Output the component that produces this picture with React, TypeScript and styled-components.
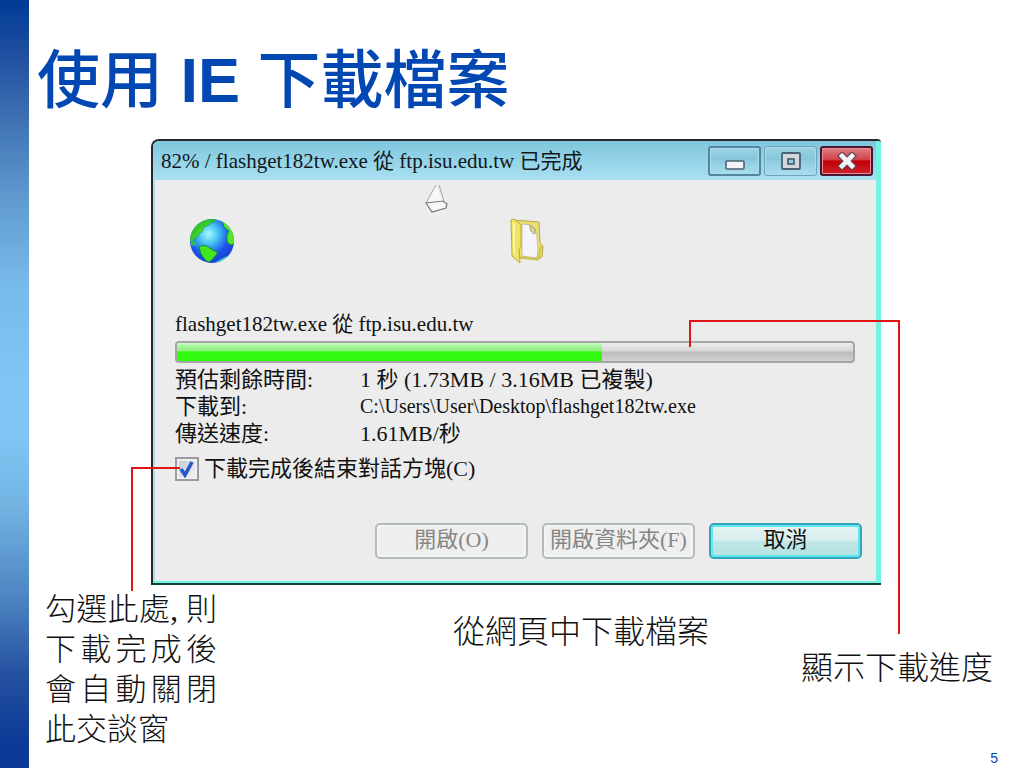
import React from 'react';
import styled, { createGlobalStyle } from 'styled-components';

const serif = '"Liberation Serif", "Noto Sans CJK TC", serif';
const sans = '"Liberation Sans", "Noto Sans CJK TC", sans-serif';

const GlobalStyle = createGlobalStyle`
  * { box-sizing: border-box; }
  body { margin: 0; background: #fff; }
  h1, h2, p, dl, dd, dt { margin: 0; font-weight: 400; }
`;

const Slide = styled.div`
  display: flex;
  min-height: 100vh;
  background: #fff;
`;

const SideStrip = styled.div`
  flex: 0 0 29px;
  background: linear-gradient(
    #003a96 0%, #1f4fa0 7%, #4073b4 16%, #609bd0 26%, #78bae9 37%, #80c5f3 50%,
    #80c5f3 57%, #72b3e2 66%, #4f88c4 77%, #24509f 88%, #0a3a96 97%
  );
`;

const Content = styled.main`
  flex: 1;
  min-width: 0;
  display: flex;
  flex-direction: column;
`;

const Title = styled.h1`
  padding: 32px 8px 11px;
  font: 500 63px/96px ${sans};
  color: #0347b3;
  strong { font-weight: 700; }
`;

const Stage = styled.section`
  position: relative;
  margin: 0 143px 0 122px;
`;

const Dialog = styled.div`
  border: solid #26262e;
  border-width: 2px 0 2px 2px;
  border-bottom-color: #12403f;
  border-radius: 8px 4px 0 0;
  background: #ececec;
  overflow: hidden;
`;

const DialogFrame = styled.div`
  border: solid #6ff5e2;
  border-width: 0 5px 2px 0;
  box-shadow: inset 2px 0 #b4dcec;
`;

const TitleBar = styled.header`
  display: flex;
  align-items: center;
  justify-content: space-between;
  height: 39px;
  padding: 0 3px 0 8px;
  background: linear-gradient(#7fc6de, #a9e0f1);
`;

const DialogTitle = styled.h2`
  font: 21px/32px ${serif};
  color: #10181c;
  white-space: nowrap;
`;

const WindowButtons = styled.div`
  display: flex;
  gap: 3px;
`;

const WindowButton = styled.button<{ $kind: 'normal' | 'faint' | 'close' }>`
  display: grid;
  place-items: center;
  width: 53px;
  height: 30px;
  padding: 0;
  border-radius: 3px;
  border: ${p => (p.$kind === 'close' ? '2px solid #4a1630' : p.$kind === 'faint' ? '1px solid #6fa5ba' : '2px solid #5586a0')};
  box-shadow: inset 0 0 0 1px ${p => (p.$kind === 'close' ? '#e88d96' : '#a9dcec')};
  background: ${p =>
    p.$kind === 'close'
      ? 'linear-gradient(#e0808a, #d3404a 45%, #c40008 50%, #d02028)'
      : 'linear-gradient(#9bd3e4, #86c6db 45%, #8fcce0 50%, #a9deee)'};
`;

const Body = styled.div`
  padding: 4px 14px 22px 22px;
`;

const FlyingFiles = styled.div`
  display: flex;
  align-items: center;
  height: 113px;
  padding-left: 15px;
  margin-bottom: 14px;
`;

const FlyingPaper = styled.svg`
  align-self: flex-start;
  margin: 0 62px 0 191px;
`;

const Transfer = styled.p`
  font: 21px/26px ${serif};
  color: #111;
`;

const Progress = styled.div`
  height: 22px;
  margin: 4px 7px 3px 0;
  border: 2px solid #a6a6a6;
  border-radius: 4px;
  background: linear-gradient(#ededed, #d6d6d6 45%, #bcbcbc 50%, #d0d0d0);
  overflow: hidden;
`;

const ProgressFill = styled.div`
  height: 100%;
  background: linear-gradient(#c5fbbd, #8af07a 42%, #33fb10 50%, #33fb10);
`;

const Details = styled.dl`
  display: grid;
  grid-template-columns: 185px 1fr;
  font: 22px/27px ${serif};
  color: #111;
`;

const Path = styled.dd`
  font-size: 20px;
`;

const Option = styled.label`
  display: flex;
  align-items: center;
  gap: 5px;
  margin-top: 6px;
  font: 22px/32px ${serif};
  color: #111;
`;

const CheckBox = styled.span`
  display: grid;
  > * { grid-area: 1 / 1; }
  svg { place-self: center; pointer-events: none; }
`;

const CheckInput = styled.input`
  appearance: none;
  width: 24px;
  height: 24px;
  margin: 0;
  border: 2px solid #9a9ca0;
  background: linear-gradient(135deg, #c2c8d2, #f6f6f6);
  box-shadow: inset 0 0 0 2px #f0f0f0;
`;

const Actions = styled.div`
  display: flex;
  justify-content: flex-end;
  gap: 14px;
  margin-top: 38px;
`;

const ActionButton = styled.button<{ $primary?: boolean }>`
  width: 153px;
  height: 36px;
  padding: 0 0 2px;
  border-radius: 5px;
  font: 22px/30px ${serif};
  color: ${p => (p.$primary ? '#111' : '#868686')};
  border: 2px solid ${p => (p.$primary ? '#35a3b8' : '#b2bcbc')};
  box-shadow: inset 0 0 0 2px ${p => (p.$primary ? '#5ce9ee' : '#f4f4f4')};
  background: ${p => (p.$primary ? 'linear-gradient(#e6f2f2, #d8eeee 48%, #bfe6e6 52%, #b4e2e2)' : '#efefef')};
`;

const CheckPointer = styled.div`
  position: absolute;
  left: -20px;
  top: 328px;
  width: 49px;
  height: 124px;
  border: solid #e01616;
  border-width: 2px 0 0 2px;
`;

const ProgressPointer = styled.div`
  position: absolute;
  right: -19px;
  top: 181px;
  width: 211px;
  height: 314px;
  border: solid #e01616;
  border-width: 2px 2px 0 0;
  &::before {
    content: '';
    display: block;
    width: 2px;
    height: 25px;
    background: #e01616;
  }
`;

const Notes = styled.div`
  display: grid;
  grid-template-columns: 172px 1fr auto;
  padding: 5px 31px 0 16px;
  color: #111;
`;

const CheckNote = styled.p`
  font: 300 31px/40px ${serif};
  text-align: justify;
`;

const Caption = styled.p<{ $drop: number }>`
  padding: ${p => p.$drop}px 0 0;
  font: 300 32px/40px ${serif};
  text-align: right;
`;

const FigureCaption = styled(Caption)`
  padding-right: 92px;
`;

const PageNumber = styled.footer`
  padding-right: 26px;
  font: 14px/16px ${sans};
  color: #0347b3;
  text-align: right;
`;

const Globe = () => (
  <svg width="44" height="44" viewBox="0 0 44 44" aria-hidden="true">
    <defs>
      <radialGradient id="sea" cx="0.42" cy="0.34" r="0.66">
        <stop offset="0" stopColor="#a6fbff" />
        <stop offset="0.35" stopColor="#45bff2" />
        <stop offset="0.7" stopColor="#1c56ea" />
        <stop offset="1" stopColor="#1a3fd0" />
      </radialGradient>
      <radialGradient id="land" cx="0.95" cy="0.9" r="1">
        <stop offset="0" stopColor="#b8fcc0" />
        <stop offset="0.5" stopColor="#4fe622" />
        <stop offset="1" stopColor="#25b030" />
      </radialGradient>
      <clipPath id="ball"><circle cx="22" cy="22" r="22" /></clipPath>
    </defs>
    <g clipPath="url(#ball)">
      <rect width="44" height="44" fill="url(#sea)" />
      <path d="M0 0h25l-1 4-3-1-2 3-5 2-2 5-4 2 1 2-4 2-2 3-5 1z" fill="url(#land)" stroke="#159a50" strokeWidth="0.6" />
      <path d="M9 28c4-3 9-1 12 2l6 3c1 3-3 4-4 7l-4 3c-4-1-6-5-8-8z" fill="#43e51c" stroke="#128a48" />
      <path d="M32 1l6 4 4 5 4 5v9l-5 2-4-3v-7l2-4-5-4z" fill="#55e824" stroke="#128a48" />
      <path d="M1 20l6 4-1 3-5-1z" fill="#2fb860" />
      <path d="M24 44l7-4 6-3-3 7z" fill="#35d0c8" />
    </g>
  </svg>
);

const Paper = () => (
  <FlyingPaper width="23" height="31" viewBox="0 0 23 31" aria-hidden="true">
    <path d="M11 1L1 19l6 9 14-4 1-5-4-2z" fill="#f7f7f7" />
    <path d="M11 1L1 19M14 1l5 16" stroke="#a5a5a5" fill="none" />
    <path d="M1 19l17-2 4 3-1 4-14 4z" stroke="#777" fill="none" strokeWidth="1.2" />
  </FlyingPaper>
);

const Folder = () => (
  <svg width="34" height="46" viewBox="0 0 34 46" aria-hidden="true">
    <path d="M3 2l26 2 1 21 3 3-1 11-5 3-17-2z" fill="#e9df72" stroke="#b7a944" />
    <path d="M12 6l8 1c4 2 7 7 7 12l1 13-1 8-15-2z" fill="#f4f4fa" stroke="#c5c298" />
    <path d="M20 7l5 4v5c-4-1-5-4-5-9z" fill="#d8d6b8" stroke="#a7a25e" />
    <path d="M1 2l3-1 7 6v21l-2 4 1 13-8-7z" fill="#efe562" stroke="#b7a944" />
    <path d="M3 5l2 1v31l-2-2z" fill="#fbf6a4" />
    <path d="M11 39l13 2 5-2 2-11" fill="none" stroke="#d3c650" strokeWidth="2" />
  </svg>
);

const progress = 62.8;

export default function App() {
  return (
    <Slide>
      <GlobalStyle />
      <SideStrip />
      <Content>
        <Title>使用 <strong>IE</strong> 下載檔案</Title>
        <Stage>
          <Dialog role="dialog" aria-labelledby="dialog-title">
            <DialogFrame>
              <TitleBar>
                <DialogTitle id="dialog-title">82% / flashget182tw.exe 從 ftp.isu.edu.tw 已完成</DialogTitle>
                <WindowButtons>
                  <WindowButton $kind="normal" aria-label="最小化">
                    <svg width="20" height="18" viewBox="0 0 20 18">
                      <rect x="1" y="9" width="18" height="8" rx="1" fill="#f4f4f6" stroke="#4a6274" strokeWidth="1.6" />
                    </svg>
                  </WindowButton>
                  <WindowButton $kind="faint" aria-label="最大化">
                    <svg width="20" height="18" viewBox="0 0 20 18">
                      <rect x="1" y="1" width="18" height="16" rx="1" fill="#d3d6dc" stroke="#4a6274" strokeWidth="1.8" />
                      <rect x="7" y="7" width="6" height="5" fill="#8fd0e4" stroke="#3f5a6e" strokeWidth="1.6" />
                    </svg>
                  </WindowButton>
                  <WindowButton $kind="close" aria-label="關閉">
                    <svg width="20" height="18" viewBox="0 0 20 18">
                      <path d="M5 4l10 10M15 4L5 14" stroke="#5c4654" strokeWidth="7" strokeLinecap="square" />
                      <path d="M5 4l10 10M15 4L5 14" stroke="#f4f4f6" strokeWidth="4.6" strokeLinecap="square" />
                    </svg>
                  </WindowButton>
                </WindowButtons>
              </TitleBar>
              <Body>
                <FlyingFiles>
                  <Globe />
                  <Paper />
                  <Folder />
                </FlyingFiles>
                <Transfer>flashget182tw.exe 從 ftp.isu.edu.tw</Transfer>
                <Progress role="progressbar" aria-valuenow={progress} aria-label="下載進度">
                  <ProgressFill style={{ width: `${progress}%` }} />
                </Progress>
                <Details>
                  <dt>預估剩餘時間:</dt>
                  <dd>1 秒 (1.73MB / 3.16MB 已複製)</dd>
                  <dt>下載到:</dt>
                  <Path>C:\Users\User\Desktop\flashget182tw.exe</Path>
                  <dt>傳送速度:</dt>
                  <dd>1.61MB/秒</dd>
                </Details>
                <Option>
                  <CheckBox>
                    <CheckInput type="checkbox" defaultChecked />
                    <svg width="16" height="18" viewBox="0 0 16 18" aria-hidden="true">
                      <path d="M2 9l4 6 7-13" fill="none" stroke="#2559c8" strokeWidth="3.6" />
                    </svg>
                  </CheckBox>
                  下載完成後結束對話方塊(C)
                </Option>
                <Actions>
                  <ActionButton disabled>開啟(O)</ActionButton>
                  <ActionButton disabled>開啟資料夾(F)</ActionButton>
                  <ActionButton $primary>取消</ActionButton>
                </Actions>
              </Body>
            </DialogFrame>
          </Dialog>
          <CheckPointer />
          <ProgressPointer />
        </Stage>
        <Notes>
          <CheckNote>勾選此處, 則下載完成後會自動關閉此交談窗</CheckNote>
          <FigureCaption $drop={22}>從網頁中下載檔案</FigureCaption>
          <Caption $drop={58}>顯示下載進度</Caption>
        </Notes>
        <PageNumber>5</PageNumber>
      </Content>
    </Slide>
  );
}
